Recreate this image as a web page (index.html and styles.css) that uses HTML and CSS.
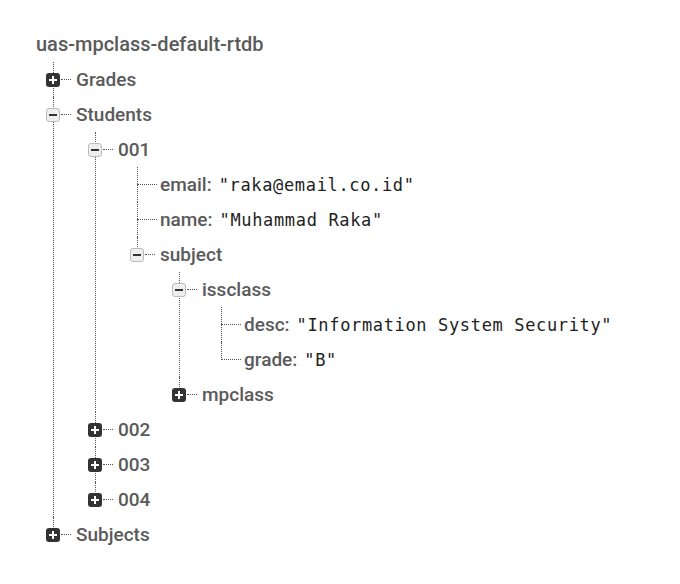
FILE: index.html
```html
<!DOCTYPE html>
<html lang="en">
<head>
  <meta charset="UTF-8" />
  <meta name="viewport" content="width=device-width, initial-scale=1.0"/>
  <title>uas-mpclass-default-rtdb</title>
  <link rel="stylesheet" href="styles.css">
</head>
<body>

<div class="db">
  <div class="root">uas-mpclass-default-rtdb</div>

  <ul class="tree">
    <li><div class="row"><span class="toggle plus"></span><span class="dash"></span><span class="key">Grades</span></div></li>
    <li>
      <div class="row"><span class="toggle minus"></span><span class="dash"></span><span class="key">Students</span></div>
      <ul>
        <li>
          <div class="row"><span class="toggle minus"></span><span class="dash"></span><span class="key">001</span></div>
          <ul>
            <li><div class="row leaf"><span class="dash"></span><span class="key">email:</span><span class="value">"raka@email.co.id"</span></div></li>
            <li><div class="row leaf"><span class="dash"></span><span class="key">name:</span><span class="value">"Muhammad Raka"</span></div></li>
            <li>
              <div class="row"><span class="toggle minus"></span><span class="dash"></span><span class="key">subject</span></div>
              <ul>
                <li>
                  <div class="row"><span class="toggle minus"></span><span class="dash"></span><span class="key">issclass</span></div>
                  <ul>
                    <li><div class="row leaf"><span class="dash"></span><span class="key">desc:</span><span class="value">"Information System Security"</span></div></li>
                    <li><div class="row leaf"><span class="dash"></span><span class="key">grade:</span><span class="value">"B"</span></div></li>
                  </ul>
                </li>
                <li><div class="row"><span class="toggle plus"></span><span class="dash"></span><span class="key">mpclass</span></div></li>
              </ul>
            </li>
          </ul>
        </li>
        <li><div class="row"><span class="toggle plus"></span><span class="dash"></span><span class="key">002</span></div></li>
        <li><div class="row"><span class="toggle plus"></span><span class="dash"></span><span class="key">003</span></div></li>
        <li><div class="row"><span class="toggle plus"></span><span class="dash"></span><span class="key">004</span></div></li>
      </ul>
    </li>
    <li><div class="row"><span class="toggle plus"></span><span class="dash"></span><span class="key">Subjects</span></div></li>
  </ul>
</div>

</body>
</html>
```

FILE: styles.css
```css
* {
  box-sizing: border-box;
}

body {
  margin: 0;
  background: #fff;
  font-family: Roboto, "Noto Sans", sans-serif;
}

.db {
  padding: 27px 0 0 36px;
}

.root {
  height: 35px;
  line-height: 35px;
  font-size: 20px;
  font-weight: 500;
  color: #5a5a5a;
}

ul {
  list-style: none;
  margin: 0;
  padding: 0 0 0 42px;
}

ul.tree {
  padding-left: 10px;
}

li {
  position: relative;
}

/* sibling line */
li::before {
  content: "";
  position: absolute;
  left: 7px;
  top: 0;
  bottom: 0;
  border-left: 1px dotted #555;
}

li:last-child::before {
  bottom: auto;
  height: 18px;
}

.row {
  display: flex;
  align-items: center;
  height: 35px;
}

.toggle {
  position: relative;
  z-index: 1;
  flex: none;
  width: 14px;
  height: 14px;
  border-radius: 3px;
}

.toggle::after {
  content: "";
  position: absolute;
  left: 3px;
  top: 6px;
  width: 8px;
  height: 2px;
}

.toggle.plus {
  background: #333;
}

.toggle.plus::after {
  background: #fff;
}

.toggle.plus::before {
  content: "";
  position: absolute;
  left: 6px;
  top: 3px;
  width: 2px;
  height: 8px;
  background: #fff;
}

.toggle.minus {
  background: #eee;
  border: 1px solid #bbb;
}

.toggle.minus::after {
  left: 2px;
  top: 5px;
  background: #333;
}

.dash {
  flex: none;
  width: 10px;
  margin: 0 5px 0 1px;
  border-top: 1px dotted #555;
}

.row.leaf .dash {
  width: 20px;
  margin-left: 7px;
  margin-right: 3px;
}

.key {
  font-size: 19px;
  font-weight: 500;
  color: #5a5a5a;
}

.value {
  margin-left: 7px;
  font-family: "DejaVu Sans Mono", "Liberation Mono", monospace;
  font-size: 17px;
  letter-spacing: 0.65px;
  color: #222;
}
```
